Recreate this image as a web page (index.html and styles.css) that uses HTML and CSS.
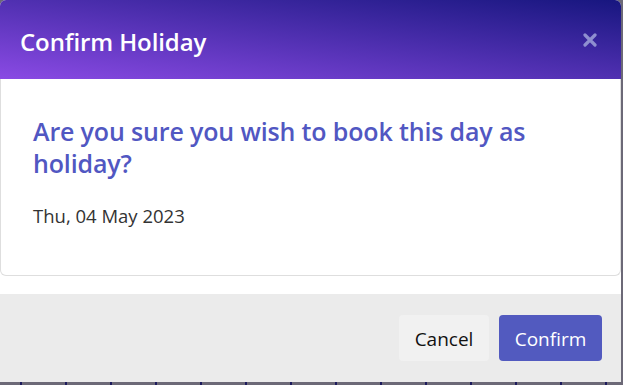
FILE: index.html
```html
<!DOCTYPE html>
<html>
  <head>
    <title>Confirm Holiday</title>
    <link rel="stylesheet" href="styles.css">
  </head>
  <body>
    <div class="modal">
      <div class="modal-header">
        <p class="modal-title">Confirm Holiday</p>
        <button class="close-button" aria-label="Close">
          <svg width="14" height="14" viewBox="0 0 14 14">
            <path d="M2 2 L12 12 M12 2 L2 12" stroke="currentColor" stroke-width="3.2" stroke-linecap="round"/>
          </svg>
        </button>
      </div>

      <div class="modal-body">
        <div class="holiday-card">
          <p class="question">Are you sure you wish to book this day as holiday?</p>
          <p class="holiday-date">Thu, 04 May 2023</p>
        </div>
      </div>

      <div class="modal-footer">
        <button class="cancel-button">Cancel</button>
        <button class="confirm-button">Confirm</button>
      </div>
    </div>
  </body>
</html>
```

FILE: styles.css
```css
body {
  margin: 0;
  height: 385px;
  overflow: hidden;
  font-family: 'Open Sans', 'Noto Sans', sans-serif;
  background-color: #6c6977;
  background-image: repeating-linear-gradient(to right, transparent 0, transparent 20px, #1c1a5c 20px, #1c1a5c 22px, transparent 22px, transparent 45px);
}

.modal {
  width: 621px;
  background-color: white;
  border-radius: 6px 6px 0 0;
  overflow: hidden;
}

.modal-header {
  height: 79px;
  box-sizing: border-box;
  padding: 3px 24px 0 20px;
  display: flex;
  align-items: center;
  justify-content: space-between;
  background: linear-gradient(to top right, #8a4ae4, #17167f);
}

.modal-title {
  margin: 0;
  color: white;
  font-size: 24px;
  font-weight: 600;
  letter-spacing: -0.1px;
}

.close-button {
  background: transparent;
  border: none;
  padding: 0;
  margin-top: -3px;
  color: #8f8fd0;
  cursor: pointer;
  display: flex;
}

.modal-body {
  padding-bottom: 18px;
}

.holiday-card {
  height: 197px;
  box-sizing: border-box;
  padding: 36px 31px 0 32px;
  border: 1px solid #dedede;
  border-top: none;
  border-radius: 0 0 6px 6px;
}

.question {
  margin: 0;
  color: #5157c2;
  font-size: 25px;
  font-weight: 600;
  line-height: 32px;
  letter-spacing: -0.15px;
}

.holiday-date {
  margin: 24px 0 0;
  color: #333;
  font-size: 18.5px;
}

.modal-footer {
  height: 88px;
  padding-right: 19px;
  display: flex;
  align-items: center;
  justify-content: flex-end;
  gap: 10px;
  background-color: #ebebeb;
}

.cancel-button,
.confirm-button {
  height: 46px;
  padding-top: 3px;
  border: none;
  border-radius: 4px;
  font-family: 'Open Sans', 'Noto Sans', sans-serif;
  font-size: 19px;
  cursor: pointer;
}

.cancel-button {
  width: 90px;
  background-color: #f1f1f1;
  color: #111;
}

.confirm-button {
  width: 103px;
  background-color: #525abf;
  color: white;
}
```
